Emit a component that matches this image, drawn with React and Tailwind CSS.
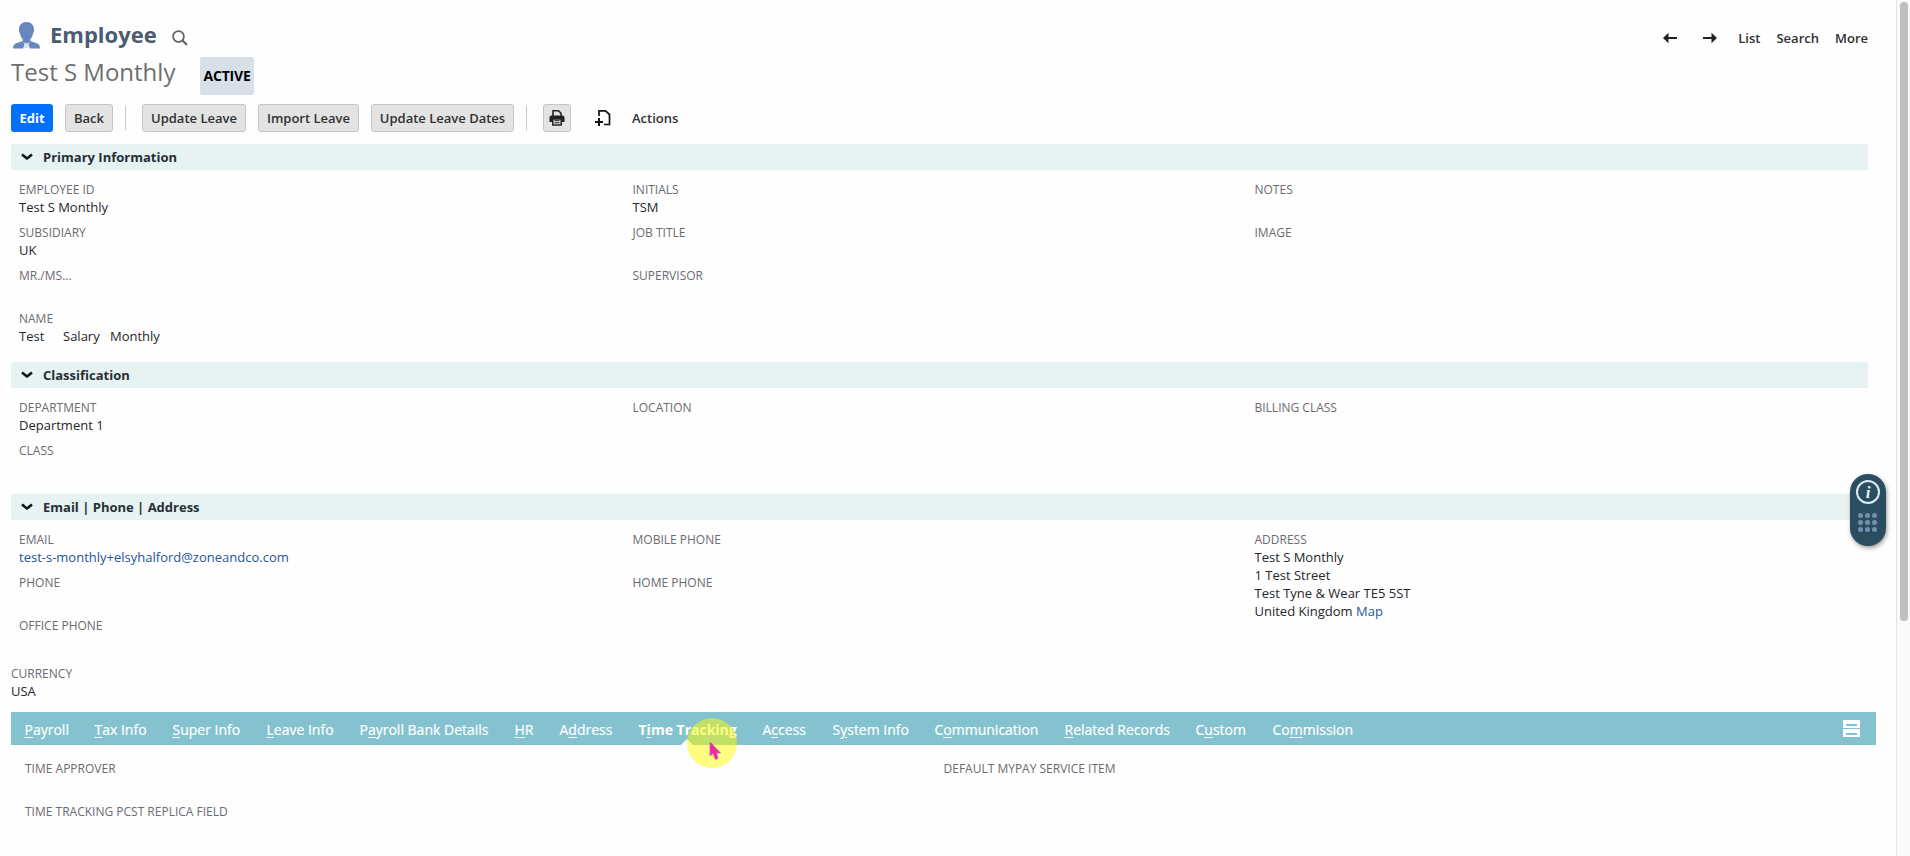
import React from "react";

function Chevron() {
  return (
    <svg className="ml-2.5 h-2 w-3 shrink-0" viewBox="0 0 12 8" fill="none" stroke="#0b1418" strokeWidth="2.6">
      <path d="M1 1.5 L6 5.5 L11 1.5" strokeLinejoin="round" />
    </svg>
  );
}

function Field({ label, children, link }) {
  return (
    <div className="h-[43px] whitespace-nowrap">
      <div className="h-[17px] text-[12px] leading-[18px] text-[#6b6b70]">{label}</div>
      <div className={link ? "text-[13px] leading-[18px] text-[#255599]" : "text-[13px] leading-[18px] text-[#26262b]"}>{children}</div>
    </div>
  );
}

function Section({ title, columns, className }) {
  return (
    <section className={className}>
      <h2 className="flex h-[26px] w-[1857px] items-center rounded-xs bg-[#e7f2f3] text-[13px] font-bold text-[#262f34]">
        <Chevron />
        <span className="ml-[10px] pt-0.5">{title}</span>
      </h2>
      <div className="grid grid-cols-[613.5px_622px_600px] pt-[11px] pl-2">
        {columns.map((col, i) => (
          <div key={i}>{col}</div>
        ))}
      </div>
    </section>
  );
}

function Button({ children, className }) {
  return (
    <button className={"flex h-7 items-center justify-center rounded-[3px] border border-[#c4c5c8] bg-[#e3e3e3] text-[13px] font-semibold whitespace-nowrap text-[#303234] " + className}>
      {children}
    </button>
  );
}

const tabs = [
  ["", "P", "ayroll", "w-[70px]"],
  ["", "T", "ax Info", "w-[78px]"],
  ["", "S", "uper Info", "w-[94px]"],
  ["", "L", "eave Info", "w-[93px]"],
  ["P", "a", "yroll Bank Details", "w-[155px]"],
  ["", "H", "R", "w-[45px]"],
  ["A", "d", "dress", "w-[79px]"],
  ["T", "i", "me Tracking", "w-[124px]"],
  ["A", "c", "cess", "w-[70px]"],
  ["S", "y", "stem Info", "w-[102px]"],
  ["C", "o", "mmunication", "w-[130px]"],
  ["", "R", "elated Records", "w-[131px]"],
  ["C", "u", "stom", "w-[77px]"],
  ["Co", "m", "mission", "w-[90px]"],
];

export default function App() {
  return (
    <div className="relative flex h-[856px] w-[1910px] overflow-hidden bg-[#fefefe] font-['Open_Sans',sans-serif]">
      <main className="h-full w-[1896px] pl-[11px]">
        <header className="flex h-[57px] w-[1857px] items-start justify-between pt-[19px]">
          <div className="flex items-center">
            <svg className="ml-0.5 h-[27px] w-[27px]" viewBox="0 0 27 27">
              <path d="M8 17h11l2 9H6z" fill="#dfe4ec" />
              <path d="M13.5 0C9 0 6 3 6 7.500c0 1.500.300 3 1 4 .600 3 1.500 4.500 3 6v1.500L4 21c-3 1-4 2.500-4 5.500h10l1.500-4.500-1.500-2 3.500 1.500L17 20l-1.500 2 1.500 4.500h10c0-3-1-4.500-4-5.500l-6-2v-1.500c1.500-1.500 2.400-3 3-6 .700-1 1-2.500 1-4C21 3 18 0 13.500 0z" fill="#6686bd" />
            </svg>
            <h1 className="-mt-0.5 ml-[10px] w-[107px] text-[22px] leading-[34px] font-bold text-[#4c5b70]">Employee</h1>
            <svg className="mt-[5px] ml-[15px] h-4 w-4" viewBox="0 0 16 16" fill="none" stroke="#5f656d">
              <circle cx="6.500" cy="6.500" r="5.400" strokeWidth="1.800" />
              <path d="M10.300 10.300L15 15" strokeWidth="2.200" />
            </svg>
          </div>
          <nav className="mt-[9px] flex items-center text-[13px] leading-5 font-semibold text-[#303234]">
            <svg className="mr-[25px] h-3 w-[15px]" viewBox="0 0 15 12">
              <path d="M0 6L5.500.800v4.200H14v2H5.500v4.200z" fill="#222" />
            </svg>
            <svg className="mr-5 h-3 w-[15px]" viewBox="0 0 15 12">
              <path d="M14 6L8.500.800v4.200H0v2h8.500v4.200z" fill="#222" />
            </svg>
            <span className="mr-4">List</span>
            <span className="mr-4">Search</span>
            <span>More</span>
          </nav>
        </header>

        <div className="flex h-[47px]">
          <div className="w-[189px] text-[24px] leading-[30px] text-[#6d6e72]">Test S Monthly</div>
          <div className="flex h-[38px] w-[54px] items-center justify-center rounded-xs bg-[#d7e0e8] pb-0.5 text-[14px] font-bold tracking-[-0.2px] text-black">ACTIVE</div>
        </div>

        <div className="flex h-10 items-start">
          <button className="h-7 w-[42px] rounded-[3px] bg-[#0070fd] pt-0.5 text-[13px] font-bold text-white">Edit</button>
          <Button className="ml-3 w-12 pt-0.5">Back</Button>
          <span className="mt-0.5 ml-3 h-6 w-px bg-[#c6c7c9]" />
          <Button className="ml-4 w-[104px] pt-0.5">Update Leave</Button>
          <Button className="ml-3 w-[101px] pt-0.5">Import Leave</Button>
          <Button className="ml-3 w-[143px] pt-0.5">Update Leave Dates</Button>
          <span className="mt-0.5 ml-3 h-6 w-px bg-[#c6c7c9]" />
          <Button className="ml-4 w-7">
            <svg className="h-4 w-4 shrink-0" viewBox="0 0 16 16" fill="none" stroke="#222">
              <path d="M4 6V.800h5.500L12 3.300V6" strokeWidth="1.600" />
              <path d="M2.500 5.500h11q2 0 2 2V12h-3V9h-9v3h-3V7.500q0-2 2-2z" fill="#222" stroke="none" />
              <path d="M3.800 9v6h8.400V9z" fill="#e3e3e3" strokeWidth="1.500" />
              <path d="M5.500 10.700h5M5.500 12.800h5" strokeWidth="1" />
            </svg>
          </Button>
          <svg className="mt-1.5 ml-6 h-4 w-4" viewBox="0 0 16 16" fill="none" stroke="#111" strokeWidth="1.700">
            <path d="M4 6V.900h6.500L14.500 4.500v10H9" />
            <path d="M0 12h8M4 8v8" strokeWidth="2" />
          </svg>
          <span className="ml-[21px] text-[13px] leading-7 font-semibold text-[#303234]">Actions</span>
        </div>

        <Section
          title="Primary Information"
          className="h-[218px]"
          columns={[
            <>
              <Field label="EMPLOYEE ID">Test S Monthly</Field>
              <Field label="SUBSIDIARY">UK</Field>
              <Field label="MR./MS..." />
              <Field label="NAME">
                <span className="flex"><span className="w-11">Test</span><span className="w-[47px]">Salary</span><span>Monthly</span></span>
              </Field>
            </>,
            <>
              <Field label="INITIALS">TSM</Field>
              <Field label="JOB TITLE" />
              <Field label="SUPERVISOR" />
            </>,
            <>
              <Field label="NOTES" />
              <Field label="IMAGE" />
            </>,
          ]}
        />
        <Section
          title="Classification"
          className="h-[132px]"
          columns={[
            <>
              <Field label="DEPARTMENT">Department 1</Field>
              <Field label="CLASS" />
            </>,
            <Field label="LOCATION" />,
            <Field label="BILLING CLASS" />,
          ]}
        />
        <Section
          title="Email | Phone | Address"
          className="h-[171px]"
          columns={[
            <>
              <Field label="EMAIL" link>test-s-monthly+elsyhalford@zoneandco.com</Field>
              <Field label="PHONE" />
              <Field label="OFFICE PHONE" />
            </>,
            <>
              <Field label="MOBILE PHONE" />
              <Field label="HOME PHONE" />
            </>,
            <Field label="ADDRESS">
              Test S Monthly<br />1 Test Street<br />Test Tyne &amp; Wear TE5 5ST<br />United Kingdom <a className="text-[#255599]">Map</a>
            </Field>,
          ]}
        />
        <div className="h-[47px]">
          <Field label="CURRENCY">USA</Field>
        </div>

        <div className="flex h-[33px] w-[1865px] items-center bg-[#85c2cf] pl-[13.5px] text-[14px] whitespace-nowrap text-white">
          {tabs.map(([a, b, c, w]) => (
            <div key={a + b + c} className={"relative flex h-full shrink-0 items-center " + w + (c === "me Tracking" ? " font-bold" : " [-webkit-text-stroke:0.2px_white]")}>
              <span className="mt-0.5">
                {a}<span className="underline underline-offset-2">{b}</span>{c}
              </span>
              {c === "me Tracking" && (
                <svg className="absolute bottom-0 left-[42px] h-[6px] w-3" viewBox="0 0 12 6">
                  <path d="M0 6L6 0l6 6z" fill="#fefefe" />
                </svg>
              )}
            </div>
          ))}
          <svg className="mr-[16px] -mt-px ml-auto h-[17px] w-[17px]" viewBox="0 0 17 17">
            <path d="M0 0h17v8H0zM3 4v2h11V4zM0 9h17v8H0zM3 13v2h11v-2z" fill="white" fillRule="evenodd" />
          </svg>
        </div>
        <div className="grid grid-cols-[918.5px_900px] pt-[15px] pl-[14px]">
          <div>
            <Field label="TIME APPROVER" />
            <Field label="TIME TRACKING PCST REPLICA FIELD" />
          </div>
          <Field label="DEFAULT MYPAY SERVICE ITEM" />
        </div>
      </main>

      <aside className="h-full w-[14px] border-l border-[#e4e4e8] bg-[#fafafa] pt-0.5 pl-[3px]">
        <div className="h-[619px] w-2 rounded-full bg-[#bebec3]" />
      </aside>

      <div className="absolute top-[474px] left-[1850px] flex h-[72px] w-9 flex-col items-center rounded-full bg-[#2a4d60] pt-[6px] shadow-[1px_2px_4px_rgba(0,0,0,0.4)]">
        <div className="flex h-6 w-6 items-center justify-center rounded-full border-2 border-[#dcebf2] font-['Liberation_Serif',serif] text-[17px] leading-none font-bold text-[#e4f0f5] italic">i</div>
        <div className="mt-[9px] mr-px grid grid-cols-3 gap-0.5">
          {Array.from({ length: 9 }, (_, i) => (
            <span key={i} className="h-[5px] w-[5px] rounded-full bg-[#7390ac]" />
          ))}
        </div>
      </div>

      <div className="absolute top-[718px] left-[687px] h-[50px] w-[50px] rounded-full bg-[#fffb00]/50" />
      <svg className="absolute top-[741px] left-[709px] h-5 w-3" viewBox="0 0 12 20">
        <path d="M1 1v14l3-2.500 2.500 6L9 17.500 7.500 12h4z" fill="#f02c9c" stroke="#c65ac4" strokeWidth=".8" />
      </svg>
    </div>
  );
}
